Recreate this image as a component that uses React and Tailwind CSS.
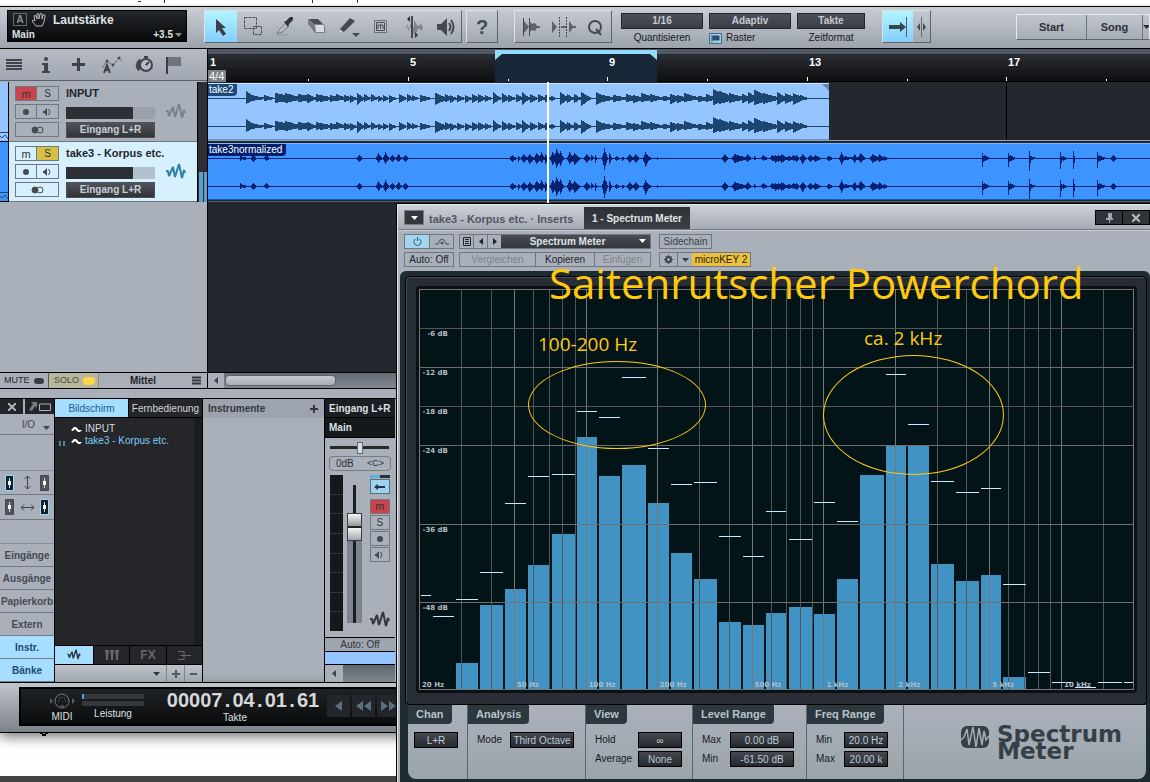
import React, { useState } from 'react';

const smallButton = 'flex items-center justify-center border border-[#6f7782] text-[#30353c]';
const valueBox = 'h-4 border border-black bg-gradient-to-b from-[#454950] to-[#25282c] text-center text-[10px] leading-[14px] text-[#b9cbd8]';
const topSelect = 'h-4 w-full appearance-none border border-[#22252a] bg-gradient-to-b from-[#4b4f58] to-[#3b3f47] text-[10px] leading-[14px] font-bold text-[#c6cad0] [text-align-last:center]';

// [position, up, down, length of the decay]
const take2Hits = [
  [38, 7, 5, 12], [44, 3, 2, 16], [56, 3, 2, 12], [67, 5, 4, 34], [77, 5, 4, 24], [90, 4, 3, 30], [99, 4, 4, 12],
  [108, 4, 3, 12], [112, 3, 3, 20], [122, 3, 3, 14], [128, 4, 2, 14], [136, 3, 3, 12], [142, 3, 4, 8], [149, 5, 6, 9],
  [156, 4, 3, 8], [163, 4, 3, 8], [170, 2, 3, 6], [175, 3, 3, 6], [181, 3, 4, 8], [191, 4, 4, 9], [199, 4, 3, 8],
  [204, 3, 2, 8], [212, 3, 3, 14], [227, 5, 6, 16], [237, 4, 3, 9], [242, 3, 4, 8], [249, 3, 3, 10], [257, 3, 4, 8],
  [264, 4, 4, 9], [270, 4, 4, 9], [277, 3, 3, 8], [285, 6, 5, 9], [294, 5, 4, 9], [300, 3, 3, 10], [308, 4, 3, 9],
  [314, 6, 6, 9], [322, 4, 4, 9], [330, 4, 3, 9], [337, 3, 3, 9], [343, 2, 2, 6], [352, 6, 6, 10], [359, 4, 4, 8],
  [366, 4, 4, 8], [373, 6, 7, 12], [388, 6, 6, 14], [394, 3, 3, 20], [405, 3, 3, 20], [418, 4, 3, 18], [425, 3, 4, 16],
  [433, 5, 3, 20], [442, 4, 3, 18], [455, 2, 2, 20], [462, 4, 5, 16], [469, 3, 4, 14], [476, 5, 3, 20], [490, 2, 3, 20],
  [498, 4, 3, 14], [505, 9, 6, 22], [511, 7, 5, 24], [521, 5, 4, 22], [534, 4, 4, 14], [540, 6, 5, 12], [546, 8, 6, 24],
  [555, 5, 5, 22], [569, 6, 6, 12], [577, 5, 5, 14], [585, 5, 6, 14], [592, 3, 2, 10],
];

const take3Hits = [
  [32, 3, 2, 3], [36, 1, 1, 4], [45, 3, 3, 4], [58, 3, 2, 4], [151, 3, 3, 4], [170, 5, 4, 4], [177, 6, 5, 4], [184, 3, 3, 4],
  [190, 4, 3, 4], [197, 3, 3, 4], [304, 3, 3, 5], [310, 2, 3, 2], [315, 4, 4, 6], [321, 4, 5, 6], [328, 5, 5, 6],
  [333, 6, 4, 4], [337, 4, 5, 3], [344, 6, 6, 6], [348, 9, 9, 6], [352, 7, 7, 4], [361, 6, 5, 6], [366, 5, 6, 7],
  [378, 4, 4, 5], [383, 3, 2, 3], [387, 3, 4, 2], [396, 10, 11, 4], [401, 5, 5, 3], [408, 2, 2, 4], [414, 1, 2, 3],
  [421, 4, 4, 6], [427, 4, 4, 5], [437, 6, 8, 5], [442, 1, 1, 2], [449, 1, 1, 2], [516, 4, 4, 5], [526, 4, 4, 18],
  [539, 4, 3, 5], [546, 2, 1, 3], [555, 3, 2, 5], [564, 3, 2, 6], [570, 3, 3, 5], [580, 2, 2, 8], [585, 3, 2, 4],
  [567, 3, 4, 6], [573, 4, 4, 8], [588, 3, 3, 4], [594, 4, 5, 5], [602, 3, 3, 5], [607, 3, 3, 7], [620, 2, 2, 6],
  [633, 6, 6, 4], [637, 2, 1, 10], [646, 4, 4, 4], [652, 5, 4, 6], [664, 4, 4, 9], [671, 4, 3, 6], [676, 2, 2, 4],
  [774, 5, 8, 2], [776, 3, 2, 6], [800, 5, 8, 2], [802, 3, 2, 6], [821, 7, 12, 2], [823, 2, 1, 5], [852, 6, 10, 2],
  [855, 2, 2, 4], [865, 7, 10, 2], [889, 6, 9, 2], [891, 3, 2, 8], [905, 3, 3, 4],
];

// distances in plot pixels: x, width, top of the bar, peak line
const bands = [
  [2, 10, null, 306], [14, 21, null, 327], [37, 22, 375, 310], [61, 23, 316, 283], [86, 21, 300, 214],
  [109, 21, 276, 187], [133, 23, 245, 185], [158, 20, 148, 122], [180, 21, 187, 128], [203, 24, 176, 88],
  [229, 21, 214, 159], [252, 21, 264, 195], [275, 23, 290, 193], [300, 22, 333, 247], [324, 21, 336, 267],
  [347, 21, 324, 222], [371, 23, 318, 250], [396, 21, 325, 213], [419, 21, 290, 232], [442, 24, 186, null],
  [468, 20, 157, 85], [490, 21, 157, 135], [513, 23, 275, 192], [538, 23, 292, 203], [563, 20, 286, 199],
  [585, 23, 389, 295], [610, 22, null, 384], [634, 21, null, 394], [657, 21, null, 399], [680, 24, null, 394], [706, 9, null, 394],
];

const freqs = [20, 30, 40, 50, 60, 70, 80, 90, 100, 200, 300, 400, 500, 600, 700, 800, 900, 1000, 2000, 3000, 4000, 5000, 6000, 7000, 8000, 9000, 10000, 15000, 20000];
const freqLabels = { 20: '20 Hz', 50: '50 Hz', 100: '100 Hz', 200: '200 Hz', 500: '500 Hz', 1000: '1 kHz', 2000: '2 kHz', 5000: '5 kHz', 10000: '10 kHz' };
const freqX = (f) => Math.round(Math.log10(f / 20) * 238.3);
const dbY = (db) => Math.round(db * 6.52);

const wavePath = (hits, width, y, attack) => {
  let d = `M0 ${y}H${width}V${y + 1}H0Z`;
  for (let x = 0; x < width; x++) {
    let up = 0;
    let down = 0;
    hits.forEach(([pos, u, dn, len]) => {
      // the short ones are clicks, they start at once
      const rise = len > 3 ? attack : 0;
      if (x < pos - rise || x >= pos + len) return;
      const fade = x < pos ? 1 - (pos - x) / (rise + 1) : 1 - (x - pos) / len;
      up = Math.max(up, u * Math.pow(fade, 1.5));
      down = Math.max(down, dn * Math.pow(fade, 1.5));
    });
    if (up || down) d += `M${x} ${y - Math.round(up)}h1V${y + 1 + Math.round(down)}h-1Z`;
  }
  return d;
};

const Wave = ({ hits, width, color, attack = 0 }) => (
  <svg width={width} height="55" className="block" fill={color} shapeRendering="crispEdges">
    <path d={wavePath(hits, width, 14, attack)} />
    <path d={wavePath(hits, width, 42, attack)} />
  </svg>
);

const WaveIcon = ({ className }) => (
  <svg width="20" height="18" viewBox="0 0 20 18" className={className} fill="none" stroke="currentColor" strokeWidth="2" strokeLinejoin="bevel">
    <path d="M0 8h2l1 5L7 4l2 10L13 1l3 14 2-8 1 3" />
  </svg>
);

const Arrow = ({ className }) => (
  <svg width="7" height="4" viewBox="0 0 7 4" className={className} fill="currentColor"><path d="M0 0h7L3.500 4Z" /></svg>
);

const LeftArrow = ({ className }) => (
  <svg width="4" height="7" viewBox="0 0 4 7" className={className} fill="currentColor"><path d="M4 0v7L0 3.500Z" /></svg>
);

const Dot = () => <svg width="6" height="6"><circle cx="3" cy="3" r="3" fill="#454a50" /></svg>;

const Monitor = () => (
  <svg width="9" height="8" viewBox="0 0 9 8" fill="none" stroke="#454a50">
    <path d="M0 3h1l3-3v8L1 5H0Z" fill="#454a50" stroke="none" /><path d="M5.500 1q3 3 0 6" />
  </svg>
);

const ToolIcon = ({ name }) => (
  <svg width="26" height="24" viewBox="0 0 26 24" fill="none" stroke="#454a52">
    {name === 'Pfeil' && <path d="M8 4v14l3-3 4 6 3-2-4-6h4Z" fill="#3b3f45" stroke="none" />}
    {name === 'Bereich' && <g strokeDasharray="3 1"><path d="M4.500 2.500h12v11h-12ZM13.500 11.500h8v8h-8Z" /></g>}
    {name === 'Teilen' && <><path d="M6 20h10" stroke="#8f959d" /><path d="M5 19l2-4 7-7 3 3-7 6Z" fill="#b8bdc4" stroke="#70757d" /><path d="M12 7l2-1 4-4h3v3l-4 4-1 3Z" fill="#333" stroke="none" /></>}
    {name === 'Radierer' && <><path d="M4 4h10l5 5h-9Z" fill="#4a4d52" stroke="none" /><path d="M10.500 9.500h9l1 2v6h-9Z" fill="#d9dce0" stroke="#777d85" /><path d="M4 4v5l7 9v-8Z" fill="#777c84" stroke="none" /></>}
    {name === 'Stift' && <><path d="M2 19l2-5L14 3l5 3L9 16Z" fill="#45494f" stroke="none" /><path d="M2 19l2-5 3 3Z" fill="#c9cdd3" stroke="none" /><path d="M16 18h8l-4 4Z" fill="#454a52" stroke="none" /></>}
    {name === 'Mute' && <><path d="M6.500 5.500h12v12h-12Z" fill="#b9bec5" stroke="#6a7078" strokeWidth="1" /><path d="M8.500 7.500h8v8h-8ZM10 14v-4h5v4M12.500 10v4" /></>}
    {name === 'Biegen' && <><path d="M1 12h5l2-3v7l2-3V8l3 4h1V5l3 5 2 1 2-3 2 5-2 3-2-3-3 5-3 1v-6Z" fill="#80868e" stroke="none" /><path d="M12 1v22" strokeWidth="2" /><path d="M10 1v6L7 4ZM15 17v6l3-3Z" fill="#333" stroke="none" /></>}
    {name === 'Hören' && <><path d="M5 9h4l6-6v18l-6-6H5Z" fill="#454a52" stroke="none" /><path d="M17 8q3 4 0 8M19 5q5 7 0 14" strokeWidth="2" /></>}
    {name === 'Transient' && <><path d="M5.500 3v18M11.500 3v18" /><path d="M6 6l5 6-5 6ZM12 7l2 2 3-1 2 3h3v2h-3l-2 3-3-1-2 2Z" fill="#5d636b" stroke="none" /></>}
    {name === 'Schnitt' && <><path d="M9.500 2v20M16.500 2v20" strokeDasharray="2 1" /><path d="M2 6l5 6-5 6ZM19 6l4 5h3v2h-3l-4 5ZM11 11h5v2h-5Z" fill="#5d636b" stroke="none" /></>}
    {name === 'Q' && <><circle cx="13" cy="12" r="6" strokeWidth="2" /><path d="M14 14l5 6" strokeWidth="2" /></>}
  </svg>
);

const tools = ['Pfeil', 'Bereich', 'Teilen', 'Radierer', 'Stift', 'Mute', 'Biegen', 'Hören'];

const Toolbar = () => (
  <div className="flex h-[43px] items-start border-y border-black bg-gradient-to-b from-[#c9ced6] to-[#9ca3ab] pt-[3px]">
    <div className="ml-[7px] h-8 w-[180px] shrink-0 border border-black bg-gradient-to-b from-[#23262a] to-[#08090a] px-1 font-bold text-[#dfe2e5]">
      <div className="flex h-[17px] items-center gap-1">
        <span className="ml-px h-[13px] w-[14px] border border-[#676b70] text-center text-[10px] leading-[12px] text-[#8e9196]">A</span>
        <svg width="16" height="14" viewBox="0 0 16 14" fill="none" stroke="#b4b7ba">
          <path d="M5 13L1 8q1-2 3 0L3 3q1-1 2 0l1 3V1q1-1 2 0v5l1-5q1-1 2 0v5l1-4q2-1 2 1l-1 6-2 4Z" />
        </svg>
        <span className="ml-[2px] text-xs">Lautstärke</span>
      </div>
      <div className="flex items-center text-[10px] leading-[14px]">
        <span>Main</span>
        <span className="ml-auto">+3.5</span>
        <Arrow className="ml-[2px] text-[#8e9196]" />
      </div>
    </div>
    <div className="ml-[17px] flex h-[33px] shrink-0 border border-[#dfe3e8] border-r-[#5e646c] border-b-[#5e646c]">
      {tools.map((t, i) => (
        <button key={t} aria-label={t} className={`flex w-8 items-center justify-center ${i === 0 ? 'bg-gradient-to-b from-[#b2f4ff] to-[#84ceff]' : ''}`}>
          <ToolIcon name={t} />
        </button>
      ))}
    </div>
    <button className="ml-[4px] h-[33px] w-8 shrink-0 border border-[#dfe3e8] border-r-[#5e646c] border-b-[#5e646c] text-xl font-bold text-[#454a52]">?</button>
    <div className="ml-4 flex h-[33px] shrink-0 border border-[#dfe3e8] border-r-[#5e646c] border-b-[#5e646c]">
      {['Transient', 'Schnitt', 'Q'].map((t) => (
        <button key={t} aria-label={t} className="flex w-8 items-center justify-center"><ToolIcon name={t} /></button>
      ))}
    </div>
    <div className="ml-[9px] flex shrink-0 gap-[6px] pt-[3px] text-center text-[10px] text-[#15181c]">
      <div className="w-[82px]">
        <select id="quant" className={topSelect}><option>1/16</option></select>
        <label htmlFor="quant" className="block leading-[18px]">Quantisieren</label>
      </div>
      <div className="w-[82px]">
        <select id="raster" className={topSelect}><option>Adaptiv</option></select>
        <div className="flex items-center gap-1 leading-[18px]">
          <svg width="13" height="11"><path d="M.5.500h12v10H.5Z" fill="#9bcbe6" stroke="#3d6d8c" /><path d="M3 2v7M4 3h6v4H4Z" fill="#2c4f68" stroke="#2c4f68" /></svg>
          <label htmlFor="raster">Raster</label>
        </div>
      </div>
      <div className="w-[68px]">
        <select id="zeit" className={topSelect}><option>Takte</option></select>
        <label htmlFor="zeit" className="block leading-[18px]">Zeitformat</label>
      </div>
    </div>
    <div className="ml-[17px] flex h-[33px] shrink-0 border border-[#dfe3e8] border-r-[#5e646c] border-b-[#5e646c]">
      <button aria-label="Autoscroll" className="flex w-[30px] items-center justify-center bg-gradient-to-b from-[#b2f4ff] to-[#84ceff]">
        <svg width="18" height="20"><path d="M0 8h11V5l6 5-6 5v-3H0Z" fill="#33464f" /><path d="M17.500 0v20" stroke="#557" /></svg>
      </button>
      <button aria-label="Cursor folgen" className="flex w-[17px] items-center justify-center">
        <svg width="9" height="20"><path d="M3 6v8L0 10ZM6 6v8l3-4Z" fill="#454a52" /><path d="M4.500 0v20" stroke="#666c74" /></svg>
      </button>
    </div>
    <div className="mt-1 ml-auto flex h-[26px] shrink-0 border border-[#e4e7eb] border-b-[#5e646c] text-[11px] font-bold text-[#2c3036]">
      <button className="w-[70px] border-r border-[#6c727a]">Start</button>
      <button className="w-14 border-r border-[#6c727a]">Song</button>
      <button aria-label="Seiten" className="w-[6px] overflow-hidden"><Arrow /></button>
    </div>
  </div>
);

const HeaderIcons = () => (
  <div className="flex h-8 items-center border-b border-[#5c626a] bg-gradient-to-b from-[#b5bbc4] to-[#a0a7b0] pl-[6px] text-[#3f444b]">
    <button aria-label="Spuren" className="w-6"><svg width="16" height="12"><path d="M0 1h16M0 4h16M0 7h16M0 10h16" stroke="currentColor" strokeWidth="2" /></svg></button>
    <button aria-label="Info" className="flex w-8 justify-center"><svg width="10" height="16" fill="currentColor"><circle cx="5" cy="2" r="2" /><path d="M1 6h6v8h2v2H1v-2h2V8H1Z" /></svg></button>
    <button aria-label="Spur hinzufügen" className="flex w-8 justify-center"><svg width="13" height="13"><path d="M6.500 0v13M0 6.500h13" stroke="currentColor" strokeWidth="3" /></svg></button>
    <button aria-label="Automation" className="flex w-9 justify-center">
      <svg width="22" height="18" viewBox="0 0 22 18" fill="none" stroke="currentColor"><path d="M1 12L6 5l6 4 6-7 3 3" stroke="#6b7178" /><g fill="currentColor"><circle cx="6" cy="5" r="1" /><circle cx="12" cy="9" r="1" /><circle cx="18" cy="2" r="1" /></g><path d="M3 17l3-8 3 8M4 14h4" strokeWidth="2" /></svg>
    </button>
    <button aria-label="Tempo" className="flex w-7 justify-center">
      <svg width="18" height="18" viewBox="0 0 18 18" fill="none" stroke="currentColor"><path d="M4 3Q-2 9 3 15l3-2V4Z" fill="currentColor" stroke="none" /><circle cx="11" cy="9" r="6" strokeWidth="2" fill="#b7bcc4" /><path d="M11 9l3-3M11 9v-1M9 1h4" strokeWidth="2" /></svg>
    </button>
    <button aria-label="Marker" className="flex w-8 justify-center"><svg width="16" height="18"><path d="M1 1h14v9H1Z" fill="#6f757d" /><path d="M1 1v17" stroke="#3c4046" strokeWidth="2" /></svg></button>
  </div>
);

const Track = ({ name, selected, muted, soloed }) => (
  <div className="flex h-[60px]">
    <div className={`flex w-[9px] items-end border-r border-b border-black text-[#20476f] ${selected ? 'bg-[#3d94ff]' : 'bg-[#94c5ff]'}`}>
      <svg width="8" height="9" fill="none" stroke="currentColor"><path d="M0 .5h8M0 4l2 2 3-3 3 4" /></svg>
    </div>
    <div className={`flex flex-1 gap-[7px] border-b border-[#70767e] pt-[4px] pl-[6px] ${selected ? 'bg-[#d6f1fd]' : 'bg-[#a9b0ba]'}`}>
      <div className="grid h-[51px] w-11 grid-cols-2 grid-rows-3 gap-y-[3px]">
        <button className={`${smallButton} text-[11px] leading-3 ${muted ? 'bg-[#cb4449]' : ''}`}>m</button>
        <button className={`${smallButton} border-l-0 text-[10px] leading-3 ${soloed ? 'bg-[#d8c045]' : ''}`}>S</button>
        <button aria-label="Aufnahme" className={smallButton}><Dot /></button>
        <button aria-label="Monitor" className={`${smallButton} border-l-0`}><Monitor /></button>
        <button aria-label="Stereo" className={`${smallButton} col-span-2`}>
          <svg width="13" height="8" fill="none" stroke="#454a50"><circle cx="4" cy="4" r="3" fill="#454a50" /><circle cx="9" cy="4" r="3" /></svg>
        </button>
      </div>
      <div className="flex w-[89px] flex-col">
        <span className="h-[21px] text-[11px] leading-[15px] font-bold whitespace-nowrap text-[#23262b]">{name}</span>
        <input type="range" aria-label={`Lautstärke ${name}`} defaultValue="75" className="h-3 w-[89px] appearance-none bg-[linear-gradient(to_right,#2c2f34_75%,#8b929c80_75%)] [&::-webkit-slider-thumb]:w-0 [&::-webkit-slider-thumb]:appearance-none" />
        <button className="mt-[3px] h-4 border border-[#4c5158] bg-gradient-to-b from-[#50545a] to-[#303338] text-[10px] leading-[14px] font-bold text-[#c9ced4]">Eingang L+R</button>
      </div>
      <div className="flex items-center pb-1 pl-1">
        <WaveIcon className={selected ? 'text-[#2f7fae]' : 'text-[#7b828b]'} />
      </div>
    </div>
    <div className="flex w-[10px] items-end gap-px border-l border-black bg-[#2c3036] pl-px">
      {selected && <><i className="h-[30px] w-1 bg-[#5b9fcb]" /><i className="h-[30px] w-1 bg-[#5b9fcb]" /></>}
    </div>
  </div>
);

const Arranger = () => (
  <div className="flex">
    <div className="w-[208px] shrink-0 border-r border-black bg-[#a9b0ba]">
      <HeaderIcons />
      <div className="pt-px">
        <Track name="INPUT" muted />
        <Track name="take3 - Korpus etc." selected soloed />
      </div>
    </div>
    <div className="relative min-w-0 flex-1 overflow-hidden bg-[#23272e]">
      <div className="h-[5px] bg-[#505a66]" />
      <div className="relative grid h-7 grid-cols-[200px_199px_200px_199px_1fr] border-b border-black bg-gradient-to-b from-[#2a2d32] to-[#0e0f11] text-[11px] font-bold text-white">
        <div className="absolute -top-1 left-[287px] z-0 h-8 w-[162px] bg-[#172738]">
          <svg width="162" height="10" className="block"><path d="M0 0h162v10l-7-6H7l-7 6Z" fill="#92dbff" /></svg>
        </div>
        {[1, 5, 9, 13, 17].map((bar) => (
          <div key={bar} className="relative flex h-[27px] flex-col">
            <span className="pl-[2px] leading-4">{bar}</span>
            {bar === 1 ? (
              <span className="h-3 w-[18px] bg-[#7e8287] pl-px text-[11px] leading-3 font-normal">4/4</span>
            ) : (
              <span className="mt-[7px] h-1 w-px bg-white" />
            )}
            <span className="absolute bottom-0 left-[100px] h-[2px] w-px bg-white" />
          </div>
        ))}
      </div>
      <div className="flex h-[59px] items-start border-b border-[#8fa2b3]">
        <div className="relative mt-px border-y border-[#cfe5ff] border-b-[#6c95c4] bg-[#94c5ff]">
          <span className="absolute top-0 left-0 rounded-br bg-[#1b4a78] pr-1 pl-px text-[10px] leading-3 text-white">take2</span>
          <svg width="7" height="7" className="absolute top-0 right-0"><path d="M0 0h7v7Z" fill="#5e88b4" /></svg>
          <Wave hits={take2Hits} width={621} color="#1c456f" />
        </div>
        <div className="ml-[177px] h-full w-px bg-black" />
      </div>
      <div className="relative mt-[2px] border-y border-[#7db6ff] border-b-[#1d5aa8] bg-[#3d94ff]">
        <span className="absolute top-0 left-0 rounded-br bg-[#001f6e] pr-1 pl-px text-[10px] leading-3 text-white">take3normalized</span>
        <Wave hits={take3Hits} width={942} color="#05216f" attack={2} />
      </div>
      <div className="mt-px h-px bg-[#50606f]" />
      <div className="h-[170px]" />
      <div className="absolute top-[33px] left-[339px] h-[121px] w-[2px] bg-white" />
    </div>
  </div>
);

const MuteBar = () => (
  <div className="flex h-[17px] border-y border-black bg-[#a9b0ba] text-[9px] text-[#1f2226]">
    <button className="flex w-[49px] items-center gap-1 border-r border-[#555b63] pl-1">MUTE <i className="h-[6px] w-[10px] rounded-sm bg-[#3a3e44]" /></button>
    <button className="flex w-[50px] items-center gap-1 border-r border-[#8d8d70] bg-[#b7b79d] pl-[5px] text-[#4b4c40]">SOLO <i className="h-2 w-3 shrink-0 rounded-sm bg-[#ffd54a]" /></button>
    <button className="flex w-[109px] items-center justify-end border-r border-black pr-[6px] text-[10px] font-bold">
      Mittel
      <svg width="9" height="9" className="ml-9"><path d="M0 1.500h9M0 4.500h9M0 7.500h9" stroke="#33373d" strokeWidth="2" /></svg>
    </button>
    <div className="flex flex-1 items-center bg-gradient-to-b from-[#666c75] to-[#81878f]">
      <button aria-label="Zurück" className="flex h-full w-4 items-center justify-center bg-[#a9b0ba]"><LeftArrow className="text-[#3d4249]" /></button>
      <div className="ml-px h-[11px] w-[111px] rounded-sm border border-[#5d636b] bg-gradient-to-b from-[#c6cad0] to-[#a9aeb7]" />
    </div>
  </div>
);

const FaderIcon = ({ active }) => (
  <svg width="11" height="16" viewBox="0 0 11 16"><path d="M1.500.500h8v15h-8Z" fill={active ? '#15222c' : '#50555c'} stroke={active ? '#8fdcff' : '#454a50'} /><path d="M5.500 3v10" stroke="#cfd6dc" /><path d="M4 6h3v4H4Z" fill="#fff" /></svg>
);

const MoveArrow = ({ vertical }) => (
  <svg width="13" height="13" viewBox="0 0 13 13" className={vertical ? 'rotate-90' : ''} fill="none" stroke="#3c4148"><path d="M0 6.500h13M3 3.500l-3 3 3 3M10 3.500l3 3-3 3" /></svg>
);

const sideTabs = ['Eingänge', 'Ausgänge', 'Papierkorb', 'Extern', 'Instr.', 'Bänke'];

const Console = () => {
  const [open, setOpen] = useState(['Instr.', 'Bänke']);
  const toggle = (tab) => setOpen(open.includes(tab) ? open.filter((t) => t !== tab) : [...open, tab]);

  return (
    <div className="flex border-y border-black bg-[#a9b0ba] text-[11px]">
      <div className="w-[55px] shrink-0 border-r border-black">
        <div className="flex h-[15px] gap-[2px] text-[#adb3ba]">
          <button aria-label="Schließen" className="flex w-[23px] items-center justify-center bg-[#222428]"><svg width="8" height="8"><path d="M0 0l8 8M8 0L0 8" stroke="currentColor" strokeWidth="2" /></svg></button>
          <button aria-label="Ablösen" className="flex flex-1 items-center justify-center gap-[2px] bg-[#222428]">
            <svg width="8" height="9"><path d="M2 0h6v6L6 4 3 9 0 8l4-6Z" fill="#777c82" /></svg>
            <svg width="12" height="8"><path d="M.5 1h11v6.500H.5Z" fill="none" stroke="currentColor" /></svg>
          </button>
        </div>
        <button className="flex h-[21px] w-full items-center justify-end gap-2 border-b border-[#747b85] pr-1 text-[10px] text-[#40454c]">I/O <Arrow className="mt-2" /></button>
        <div className="h-9 border-b border-[#8a919b]" />
        <div className="flex h-6 items-center justify-between border-b border-[#747b85] px-1"><FaderIcon active /><MoveArrow vertical /><FaderIcon /></div>
        <div className="flex h-[25px] items-center justify-between border-b border-[#747b85] px-1"><FaderIcon /><MoveArrow /><FaderIcon active /></div>
        <div className="h-6 border-b border-[#8a919b]" />
        {sideTabs.map((tab) => (
          <button key={tab} onClick={() => toggle(tab)} className={`block h-[23px] w-full border-b border-[#747b85] text-[10px] font-bold ${open.includes(tab) ? 'bg-[#a5deff] text-[#1c4b70]' : 'text-[#454a52]'}`}>{tab}</button>
        ))}
      </div>
      <div className="flex w-[148px] shrink-0 flex-col border-r border-black bg-[#24262a]">
        <div className="flex h-[19px] border-b border-black text-[10px]">
          <button className="w-[74px] border-r border-black bg-[#a5deff] text-[#1b6090]">Bildschirm</button>
          <button className="flex-1 whitespace-nowrap text-[#d3d7db]">Fernbedienung</button>
        </div>
        <ul className="flex-1 border-r-[8px] border-[#1a1c1f] pt-1 pl-4 text-[10px] leading-3 text-[#d8dbde]">
          <li className="flex items-center gap-[3px] pt-px"><svg width="11" height="7"><path d="M0 4l3-3h2l3 3h3L9 6H7L4 3 2 5Z" fill="#fff" /></svg>INPUT</li>
          <li className="relative flex items-center gap-[3px] whitespace-nowrap text-[#80cdf6]">
            <svg width="7" height="5" className="absolute top-[6px] -left-3"><path d="M0 0h2v5H0ZM4 0h2v5H4Z" fill="#4d87a8" /></svg>
            <svg width="11" height="7"><path d="M0 4l3-3h2l3 3h3L9 6H7L4 3 2 5Z" fill="#fff" /></svg>take3 - Korpus etc.
          </li>
        </ul>
        <div className="flex h-5 border-y border-black text-[#66696e]">
          <button aria-label="Audio" className="flex w-[38px] items-center justify-center bg-[#a5deff] text-[#26333d]"><WaveIcon className="h-3 w-4" /></button>
          <button aria-label="Instrumente" className="flex flex-1 items-center justify-center border-l border-black"><svg width="14" height="10" fill="currentColor"><path d="M0 0h4L3 7v3H1V7ZM5 0h4L8 7v3H6V7ZM10 0h4l-1 7v3h-2V7Z" /></svg></button>
          <button className="flex-1 border-l border-black text-[12px] font-bold">FX</button>
          <button aria-label="Busse" className="flex flex-1 items-center justify-center border-l border-black"><svg width="13" height="9" fill="none" stroke="currentColor"><path d="M0 .5h6v8H0M2 4.500h11" /></svg></button>
        </div>
        <div className="flex h-[17px] items-center bg-gradient-to-b from-[#c0c5cc] to-[#a0a6af] text-[#555b63]">
          <Arrow className="mr-[6px] ml-auto text-[#33373d]" />
          <button aria-label="Plus" className="flex h-full w-[18px] items-center justify-center border-l border-[#80868e]"><svg width="8" height="8"><path d="M4 0v8M0 4h8" stroke="currentColor" strokeWidth="2" /></svg></button>
          <button aria-label="Minus" className="flex h-full w-[18px] items-center justify-center border-l border-[#80868e]"><svg width="7" height="8"><path d="M0 4h7" stroke="currentColor" strokeWidth="2" /></svg></button>
        </div>
      </div>
      <div className="w-[122px] shrink-0 border-r border-black">
        <div className="flex h-[19px] items-center justify-between bg-[#9ea4ad] pr-[6px] pl-[5px] text-[10px] font-bold text-[#33373e]">
          Instrumente
          <svg width="8" height="8"><path d="M4 0v8M0 4h8" stroke="currentColor" strokeWidth="2" /></svg>
        </div>
      </div>
      <div className="flex w-[70px] shrink-0 flex-col">
        <div className="h-[19px] border-b border-black bg-[#1b1e21] pl-1 text-[10px] leading-[19px] font-bold whitespace-nowrap text-[#dbe0e4]">Eingang L+R</div>
        <div className="h-5 border-b border-black bg-[#15181a] pl-1 text-[10px] leading-[19px] font-bold text-[#dbe0e4]">Main</div>
        <input type="range" aria-label="Panorama" className="mx-[5px] mt-[1px] h-[17px] w-[59px] appearance-none bg-[linear-gradient(#252b25,#252b25)] bg-[length:100%_3px] bg-center bg-no-repeat [&::-webkit-slider-thumb]:h-3 [&::-webkit-slider-thumb]:w-[6px] [&::-webkit-slider-thumb]:appearance-none [&::-webkit-slider-thumb]:border [&::-webkit-slider-thumb]:border-[#666c74] [&::-webkit-slider-thumb]:bg-[#d7dade]" />
        <div className="mx-1 flex h-[15px] items-center justify-between rounded-sm border border-[#757c86] px-[6px] text-[10px] text-[#2c3036]"><span>0dB</span><span className="text-[9px]">&lt;C&gt;</span></div>
        <div className="mx-[5px] mt-1 flex flex-1 gap-[1px] pb-1">
          <div className="flex h-[156px] w-[13px] flex-col justify-evenly bg-[#15181b]">
            {[0, 1, 2, 3, 4, 5, 6].map((n) => <i key={n} className="h-px bg-[#263947]" />)}
          </div>
          <div className="flex w-[22px] justify-center">
            <input type="range" aria-label="Pegel" defaultValue="75" className="h-[138px] w-[15px] appearance-none self-center bg-[linear-gradient(to_right,transparent_6px,#1b1d20_6px,#1b1d20_9px,transparent_9px),linear-gradient(#a9b0ba_30%,#7c838d_30%)] [direction:rtl] [writing-mode:vertical-lr] [&::-webkit-slider-thumb]:h-7 [&::-webkit-slider-thumb]:w-[15px] [&::-webkit-slider-thumb]:appearance-none [&::-webkit-slider-thumb]:border [&::-webkit-slider-thumb]:border-[#3a3e44] [&::-webkit-slider-thumb]:bg-[linear-gradient(#f5f5f5,#8f959e_48%,#222_48%,#222_52%,#f8f8f8_52%,#a0a6ae)]" />
          </div>
          <div className="ml-[4px] flex w-[21px] flex-col gap-[1px] text-[10px]">
            <div className="h-[3px] bg-[linear-gradient(to_right,#5faee0_50%,#2b3036_50%)]" />
            <button aria-label="Routing" className="mb-1 flex h-[15px] items-center justify-center border border-[#53717f] bg-[#9dd2f0]"><svg width="11" height="6"><path d="M0 3l4-3v2h7v2H4v2Z" fill="#29323a" /></svg></button>
            <button className={`${smallButton} h-[15px] bg-[#cb4449] text-[11px]`}>m</button>
            <button className={`${smallButton} h-[15px]`}>S</button>
            <button aria-label="Aufnahme" className={`${smallButton} h-[15px]`}><Dot /></button>
            <button aria-label="Monitor" className={`${smallButton} h-[15px]`}><Monitor /></button>
            <WaveIcon className="mt-auto mb-1 text-[#33373d]" />
          </div>
        </div>
        <div className="border-t border-black bg-[#9ea5ae] text-center text-[10px] leading-[13px] text-[#30353c]">Auto: Off</div>
        <div className="h-[14px] border-y border-black bg-[#94c5ff]" />
        <div className="flex h-[17px] items-center bg-gradient-to-b from-[#5e646d] to-[#81878f]">
          <span className="flex h-full w-[18px] items-center justify-center bg-[#a9b0ba]"><LeftArrow className="text-[#3d4249]" /></span>
        </div>
      </div>
      <div className="flex-1 bg-[#a9b0ba]" />
    </div>
  );
};

const Transport = () => (
  <div className="flex border-b border-black bg-gradient-to-b from-[#c2c7ce] to-[#7c828a] pt-1 pb-[6px] shadow-[0_4px_12px_#0008]">
    <div className="ml-[19px] flex h-[39px] flex-1 border-2 border-black bg-gradient-to-b from-[#1f2225] to-[#0a0b0c] text-[10px] text-[#dfe2e5]">
      <div className="ml-[27px] w-7 text-center">
        <svg width="26" height="20" viewBox="0 0 26 20" className="mx-auto block" fill="none" stroke="#777c81">
          <circle cx="13" cy="12" r="7" /><path d="M9 12h1M16 12h1M10 9h1M15 9h1M13 8v1M11 17h4" /><path d="M1 9v6l3-3ZM23 9v6l3-3Z" fill="#51626d" stroke="none" />
        </svg>
        <div className="leading-[15px]">MIDI</div>
      </div>
      <div className="ml-[6px] w-[62px] pt-[5px]">
        <div className="h-[5px] border-l-2 border-[#49a8dc] bg-[#34383d]" />
        <div className="mt-[2px] h-[5px] bg-[#34383d]" />
        <div className="text-center leading-4">Leistung</div>
      </div>
      <div className="ml-[21px] w-[156px] text-center">
        <div className="text-xl leading-[22px] font-bold whitespace-nowrap text-[#d5d7d9]">
          {'00007.04.01.61'.split('.').map((part, i) => (
            <React.Fragment key={part}>{i > 0 && <span className="inline-block w-[10px]">.</span>}{part}</React.Fragment>
          ))}
        </div>
        <div className="pr-4 leading-[13px]">Takte</div>
      </div>
      <div className="ml-[6px] flex gap-[2px] pt-[6px] text-[#5c7080]">
        {['M7 0v10L0 5Z', 'M7 0v10L0 5ZM15 0v10L8 5Z', 'M0 0v10l7-5ZM8 0v10l7-5Z'].map((d, i) => (
          <button key={d} aria-label={['Zurück', 'Rückspulen', 'Vorspulen'][i]} className="flex h-[22px] w-[23px] items-center justify-center bg-[#222529]"><svg width={i ? 15 : 7} height="10" fill="currentColor"><path d={d} /></svg></button>
        ))}
      </div>
    </div>
  </div>
);

const Plot = () => (
  <svg viewBox="0 0 716 402" className="block w-full bg-[#021417]" shapeRendering="crispEdges" fontFamily="'DejaVu Sans', sans-serif">
    {bands.map(([x, w, top]) => top && <rect key={x} x={x} y={top} width={w} height={401 - top} fill="#4193c4" />)}
    {freqs.map((f) => <rect key={f} x={freqX(f)} width="1" height="402" fill={freqLabels[f] || f === 20000 ? '#777777' : '#555555'} />)}
    {[0, 6, 12, 18, 24, 36, 48].map((db) => <rect key={db} y={dbY(db)} width="716" height="1" fill={db === 6 || db === 18 ? '#555555' : '#707070'} />)}
    <rect y="401" width="716" height="1" fill="#777777" />
    {bands.map(([x, w, , peak]) => peak && <rect key={x} x={x} y={peak} width={w} height="1" fill="#c8ecff" />)}
    <g fontSize="7" fontWeight="bold" fill="#b5bcc2">
      {[6, 12, 18, 24, 36, 48].map((db) => <text key={db} x="29" y={dbY(db) + 8} textAnchor="end">-{db} dB</text>)}
      {Object.entries(freqLabels).map(([f, label]) => <text key={f} x={freqX(f) + 3} y="399">{label}</text>)}
    </g>
  </svg>
);

const Section = ({ title, className, children }) => (
  <fieldset className={`shrink-0 border-r border-[#5c656c] ${className}`}>
    <legend className="float-left h-[19px] rounded-br bg-[#2c383d] px-2 text-[11px] leading-[18px] font-bold whitespace-nowrap text-[#b9c3ca]">{title}</legend>
    <div className="clear-both flex flex-col gap-[3px] pt-2">{children}</div>
  </fieldset>
);

const Field = ({ label, value, width, labelWidth }) => (
  <label className={`flex items-center text-[10px] leading-4 text-[#16191d] ${label ? 'ml-[9px]' : 'ml-[6px]'}`}>
    {label && <span className={labelWidth}>{label}</span>}
    <input aria-label={label || 'Kanal'} defaultValue={value} className={`${valueBox} ${width}`} />
  </label>
);

const SpectrumWindow = () => (
  <div className="absolute top-[203px] right-0 left-[396px] border-t border-l border-black bg-[#a9b0ba]">
    <div className="border-t border-l border-[#e5e8eb]">
      <div className="flex h-[25px] items-end border-b border-[#757b84] bg-gradient-to-b from-[#cdd1d8] to-[#a5abb4]">
        <button aria-label="Menü" className="mb-1 ml-[6px] flex h-[15px] w-5 items-center justify-center border border-[#777d85] bg-[#33373c] text-white"><Arrow /></button>
        <span className="mb-[2px] ml-[5px] w-[155px] text-[11px] leading-4 font-bold whitespace-nowrap text-[#50555d]">take3 - Korpus etc. · Inserts</span>
        <button className="h-[22px] w-[106px] bg-gradient-to-b from-[#2d3035] to-[#3b3f45] text-[10px] font-bold whitespace-nowrap text-[#e1e4e7]">1 - Spectrum Meter</button>
        <div className="mb-1 ml-auto flex h-[15px] gap-px border border-black bg-black">
          <button aria-label="Anheften" className="flex w-[26px] items-center justify-center bg-[#303438]"><svg width="7" height="10"><path d="M2 0h4v5h1v2H4v3H3V7H0V5h2Z" fill="#9da6ad" /></svg></button>
          <button aria-label="Schließen" className="flex w-[26px] items-center justify-center bg-[#303438]"><svg width="8" height="8"><path d="M0 0l8 8M8 0L0 8" stroke="#b8bec4" strokeWidth="2" /></svg></button>
        </div>
      </div>
      <div className="grid grid-cols-[50px_192px_1fr] gap-x-[5px] gap-y-[3px] border-t border-[#c9cdd4] pt-[3px] pb-1 pl-[6px] text-[10px]">
        <div className="flex h-[15px] border border-[#6f7782]">
          <button aria-label="An" className="flex w-[25px] items-center justify-center border-r border-[#6f7782] bg-[#a4d5ef]"><svg width="9" height="9" fill="none" stroke="#285a75"><path d="M2.500 2a3.500 3.500 0 1 0 4 0M4.500 0v4" /></svg></button>
          <button aria-label="Bypass" className="flex flex-1 items-center justify-center"><svg width="14" height="7" fill="none" stroke="#454a52"><path d="M0 6h3q4-10 8 0h3" /><circle cx="7" cy="5" r="1" fill="#454a52" /></svg></button>
        </div>
        <div className="flex h-[15px] border border-[#6f7782]">
          <button aria-label="Presets" className="flex w-[14px] items-center justify-center border-r border-[#6f7782]"><svg width="8" height="9" fill="none" stroke="#22262b"><path d="M.5.500h7v8h-7ZM2 2.500h4M2 4.500h4M2 6.500h4" /></svg></button>
          <button aria-label="Vorheriges" className="flex w-[14px] items-center justify-center border-r border-[#6f7782]"><LeftArrow className="text-[#22262b]" /></button>
          <button aria-label="Nächstes" className="flex w-[13px] items-center justify-center"><LeftArrow className="rotate-180 text-[#22262b]" /></button>
          <div className="relative flex-1">
            <select aria-label="Preset" className="block h-[13px] w-full appearance-none bg-gradient-to-b from-[#4a4e55] to-[#33363b] pr-4 text-[10px] leading-[13px] font-bold text-[#dfe3e6] [text-align-last:center]"><option>Spectrum Meter</option></select>
            <Arrow className="pointer-events-none absolute top-1 right-1 text-white" />
          </div>
        </div>
        <button className="ml-[3px] h-[15px] w-[53px] border border-[#6f7782] leading-[13px] text-[#3a3f46]">Sidechain</button>
        <button className="h-[15px] border border-[#6f7782] leading-[13px] text-[#22262b]">Auto: Off</button>
        <div className="flex h-[15px] border border-[#6f7782] leading-[13px] text-[#7c838c]">
          <button className="w-[75px]">Vergleichen</button>
          <button className="w-[60px] border-x border-[#6f7782] text-[#22262b]">Kopieren</button>
          <button className="flex-1">Einfügen</button>
        </div>
        <div className="ml-[3px] flex h-[15px] w-[92px] border border-[#6f7782] leading-[13px]">
          <button aria-label="Einstellungen" className="flex w-[17px] items-center justify-center"><svg width="9" height="9" fill="none" stroke="#3a3f46"><circle cx="4.500" cy="4.500" r="2.500" strokeWidth="2" /><path d="M4.500 0v9M0 4.500h9M1.500 1.500l6 6M7.500 1.500l-6 6" strokeDasharray="2 5" /></svg></button>
          <button aria-label="Mehr" className="flex w-[15px] items-center justify-center border-l border-[#6f7782]"><Arrow className="text-[#3a3f46]" /></button>
          <button className="flex-1 bg-[#ecc03f] whitespace-nowrap text-[#26210f]">microKEY 2</button>
        </div>
      </div>
      <div className="ml-[2px] rounded-t-md bg-[#1e2b30] pt-[5px] pb-[3px] pl-[5px]">
        <div className="mr-[3px] rounded-sm border border-black bg-[#282c34] pt-[9px] pr-[9px] pb-[11px] pl-[10px] shadow-[inset_1px_1px_0_#454b55]">
          <div className="rounded-sm border-[3px] border-[#0b1013]"><Plot /></div>
        </div>
        <div className="mr-1 ml-[3px] flex h-[74px] rounded-b-lg bg-gradient-to-b from-[#aab1bb] to-[#9ba4ab]">
          <Section title="Chan" className="w-[60px]"><Field value="L+R" width="w-11" /></Section>
          <Section title="Analysis" className="w-[118px]"><Field label="Mode" value="Third Octave" labelWidth="w-[33px]" width="w-16" /></Section>
          <Section title="View" className="w-[107px]">
            <Field label="Hold" value="∞" labelWidth="w-[43px]" width="w-11" />
            <Field label="Average" value="None" labelWidth="w-[43px]" width="w-11" />
          </Section>
          <Section title="Level Range" className="w-[114px]">
            <Field label="Max" value="0.00 dB" labelWidth="w-[28px]" width="w-16" />
            <Field label="Min" value="-61.50 dB" labelWidth="w-[28px]" width="w-16" />
          </Section>
          <Section title="Freq Range" className="w-[97px]">
            <Field label="Min" value="20.0 Hz" labelWidth="w-[28px]" width="w-11" />
            <Field label="Max" value="20.00 k" labelWidth="w-[28px]" width="w-11" />
          </Section>
          <div className="flex min-w-0 flex-1 justify-end gap-2 pt-[21px] pr-6 text-[#363f46]">
            <svg width="28" height="22" viewBox="0 0 28 22" className="shrink-0">
              <rect width="28" height="22" rx="6" fill="currentColor" />
              <path d="M0 14l3-3 3-8 2 16 4-18 3 20 3-19 3 17 2-14 2 9 3-4" fill="none" stroke="#a5adb5" strokeWidth="1.500" />
            </svg>
            <div className="font-['DejaVu_Sans',sans-serif] text-[23px] leading-[17px] font-bold">Spectrum<br />Meter</div>
          </div>
        </div>
      </div>
    </div>
  </div>
);

const Notes = () => (
  <div className="font-['Open_Sans',sans-serif] whitespace-nowrap text-[#ffc90e]">
    <div className="absolute top-[265px] left-[549px] text-[42px] leading-9">Saitenrutscher Powerchord</div>
    <div className="absolute top-[332px] left-[538px] text-[19px] leading-6">100-200 Hz</div>
    <div className="absolute top-[326px] left-[864px] text-[19px] leading-6">ca. 2 kHz</div>
    <div className="absolute top-[361px] left-[528px] h-[88px] w-[178px] rounded-[50%] border border-current" />
    <div className="absolute top-[355px] left-[823px] h-[120px] w-[181px] rounded-[50%] border border-current" />
  </div>
);

export default function App() {
  return (
    <div className="relative overflow-hidden bg-white font-['Liberation_Sans',Arial,sans-serif]">
      <div className="h-[6px] border-b-2 border-[#eef1ea]">
        <svg width="400" height="3" className="block" fill="#3a2540"><path d="M138 1h3v1h-3ZM164 0h1v3h-1ZM312 0h1v3h-1ZM357 0h1v3h-1Z" /></svg>
      </div>
      <Toolbar />
      <Arranger />
      <MuteBar />
      <div className="h-[9px] bg-[#a9b0ba]" />
      <Console />
      <Transport />
      <div className="h-[43px] pl-10"><svg width="8" height="3" className="relative block"><path d="M0 0h3v1h2V0h3v1H6v2H2V1H0Z" /></svg></div>
      <div className="h-[7px] bg-[#444444]" />
      <SpectrumWindow />
      <Notes />
    </div>
  );
}
